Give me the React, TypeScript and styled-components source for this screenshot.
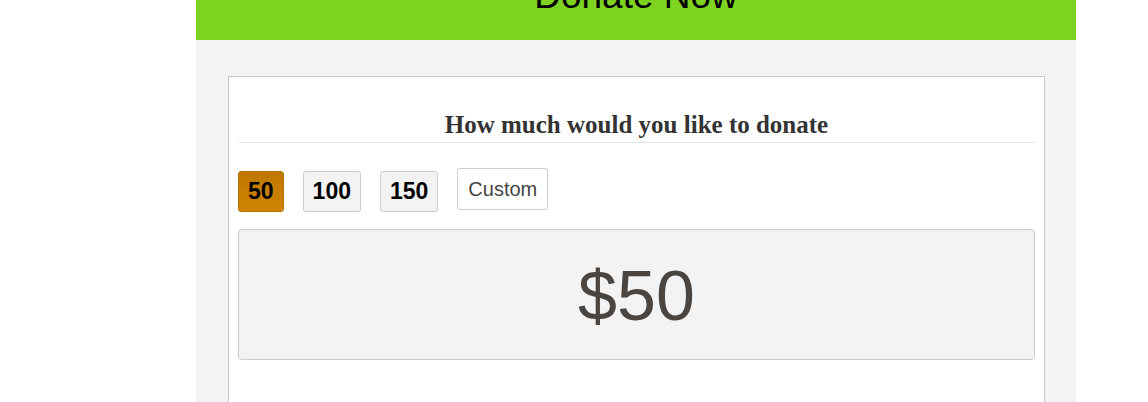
import styled, { createGlobalStyle } from "styled-components";

const GlobalStyle = createGlobalStyle`
  html, body {
    margin: 0;
    padding: 0;
    background: #ffffff;
    font-family: "Liberation Sans", Arial, sans-serif;
  }
`;

const Page = styled.div`
  width: 880px;
  margin-left: 196px;
`;

const Header = styled.header`
  height: 40px;
  background: #7ed321;
  overflow: hidden;
  text-align: center;
`;

const HeaderTitle = styled.h1`
  margin: -23px 0 0;
  font-size: 37px;
  line-height: 37px;
  font-weight: normal;
  color: #000000;
`;

const Panel = styled.section`
  background: #f3f3f3;
  padding: 36px 31px 0 32px;
  height: 362px;
  box-sizing: border-box;
`;

const Card = styled.div`
  background: #ffffff;
  border: 1px solid #c8c8c8;
  border-bottom: none;
  padding: 0 9px;
  height: 100%;
  box-sizing: border-box;
`;

const Question = styled.h3`
  margin: 0;
  padding: 33px 0 2px;
  font-family: "Liberation Serif", "Times New Roman", serif;
  font-size: 25px;
  line-height: 30px;
  font-weight: bold;
  color: #333333;
  text-align: center;
  border-bottom: 1px solid #e5e5e5;
`;

const AmountRow = styled.div`
  display: flex;
  align-items: flex-start;
  gap: 19px;
  margin-top: 25px;
`;

const AmountButton = styled.button<{ $active?: boolean }>`
  margin-top: 3px;
  height: 41px;
  padding: 0 9px;
  font-family: "Liberation Sans", Arial, sans-serif;
  font-size: 23px;
  font-weight: bold;
  color: #000000;
  border-radius: 3px;
  border: 1px solid ${(p) => (p.$active ? "#b37100" : "#cccccc")};
  background: ${(p) =>
    p.$active ? "linear-gradient(#bf7700, #d08400)" : "#f3f3f3"};
  cursor: pointer;
`;

const CustomButton = styled.button`
  height: 42px;
  padding: 0 10px;
  font-family: "Liberation Sans", Arial, sans-serif;
  font-size: 20px;
  color: #444444;
  background: #ffffff;
  border: 1px solid #cccccc;
  border-radius: 3px;
  cursor: pointer;
`;

const AmountDisplay = styled.div`
  margin-top: 17px;
  height: 131px;
  box-sizing: border-box;
  background: #f3f3f3;
  border: 1px solid #cccccc;
  border-radius: 4px;
  display: flex;
  align-items: center;
  justify-content: center;
  font-size: 70px;
  color: #4b4541;
  padding-top: 2px;
`;

const amounts = [50, 100, 150];

export default function App() {
  const selected = 50;
  return (
    <>
      <GlobalStyle />
      <Page>
        <Header>
          <HeaderTitle>Donate Now</HeaderTitle>
        </Header>
        <Panel>
          <Card>
            <Question>How much would you like to donate</Question>
            <AmountRow>
              {amounts.map((a) => (
                <AmountButton key={a} $active={a === selected}>
                  {a}
                </AmountButton>
              ))}
              <CustomButton>Custom</CustomButton>
            </AmountRow>
            <AmountDisplay>${selected}</AmountDisplay>
          </Card>
        </Panel>
      </Page>
    </>
  );
}
